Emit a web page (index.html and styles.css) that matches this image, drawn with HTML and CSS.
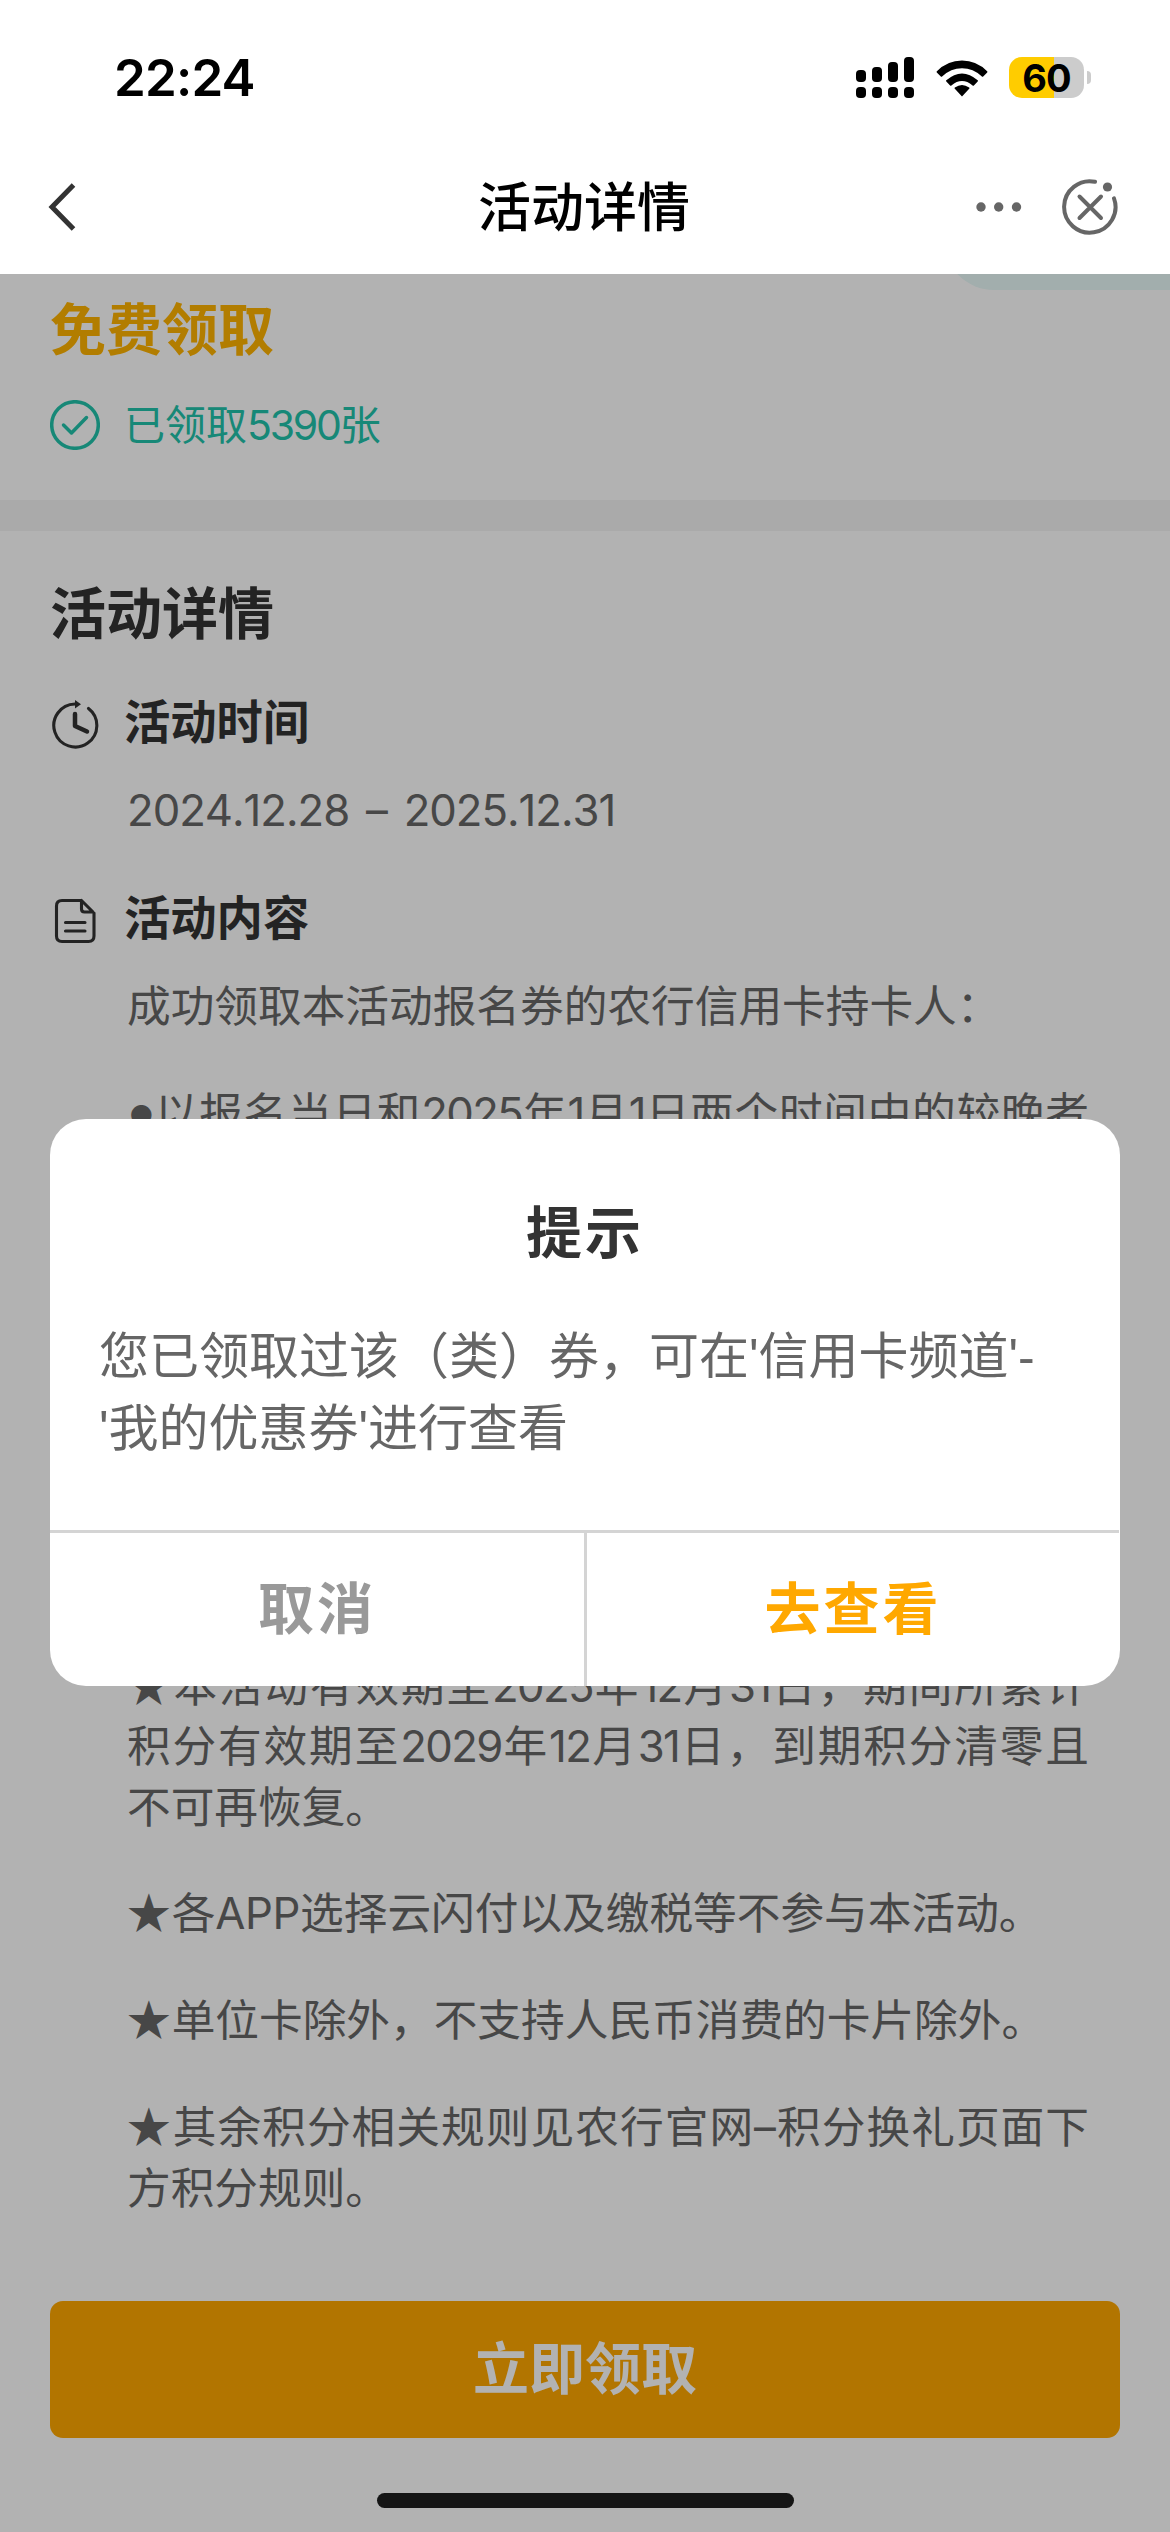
FILE: index.html
```html
<!DOCTYPE html>
<html lang="zh-CN">
<head>
<meta charset="utf-8">
<title>活动详情</title>
<link rel="stylesheet" href="styles.css">
</head>
<body>
<div class="phone">
  <div class="status-bar">
    <span class="time">22:24</span>
    <div class="status-icons">
      <svg class="signal" width="58" height="41" viewBox="0 0 58 41">
        <rect x="0" y="13" width="10" height="12" rx="4"/><rect x="16" y="10" width="10" height="15" rx="4"/>
        <rect x="32" y="5" width="10" height="20" rx="4"/><rect x="48" y="0" width="10" height="25" rx="4"/>
        <rect x="0" y="30" width="10" height="11" rx="4"/><rect x="16" y="30" width="10" height="11" rx="4"/>
        <rect x="32" y="30" width="10" height="11" rx="4"/><rect x="48" y="30" width="10" height="11" rx="4"/>
      </svg>
      <svg class="wifi" width="52" height="38" viewBox="0 0 52 38">
        <path d="M26 37.5 L33.4 29.6 Q33.8 29 33.1 28.5 Q26 23.4 18.900 28.500 Q18.200 29 18.600 29.600 Z"/>
        <path d="M10.300 21.300 Q26 7.500 41.700 21.300 Q42.300 21.900 41.700 22.500 L37.900 26.400 Q37.300 27 36.600 26.400 Q26 17.500 15.400 26.400 Q14.700 27 14.100 26.400 L10.300 22.500 Q9.700 21.900 10.300 21.300 Z"/>
        <path d="M.9 12.200 Q11.500 1.500 26 1.500 Q40.500 1.500 51.100 12.200 Q51.800 12.800 51.200 13.400 L47.200 17.400 Q46.600 18 45.900 17.400 Q37.200 9.200 26 9.200 Q14.800 9.200 6.100 17.400 Q5.400 18 4.800 17.400 L.8 13.400 Q.2 12.800 .9 12.200 Z"/>
      </svg>
      <div class="battery"><span class="battery-body">60</span><span class="battery-cap"></span></div>
    </div>
  </div>
  <div class="nav-bar">
    <svg class="back" width="30" height="50" viewBox="0 0 30 50"><path d="M26.500 3 L5 25 L26.500 47"/></svg>
    <h1>活动详情</h1>
    <div class="nav-actions">
      <svg width="46" height="10" viewBox="0 0 46 10"><circle cx="5" cy="5" r="4.700"/><circle cx="22.700" cy="5" r="4.700"/><circle cx="40.500" cy="5" r="4.700"/></svg>
      <svg class="close" width="60" height="60" viewBox="0 0 60 60">
        <path d="M35 4.800 A25.700 25.700 0 1 0 54 21.300"/>
        <path d="M19.500 19.500 L41 41 M41 19.500 L19.500 41"/>
        <circle cx="47.500" cy="10" r="4.600"/>
      </svg>
    </div>
  </div>

  <main class="page">
    <section class="coupon">
      <div class="corner-tag"></div>
      <div class="price">免费领取</div>
      <div class="claimed">
        <svg width="50" height="50" viewBox="0 0 50 50"><circle cx="25" cy="25" r="23.300"/><path d="M13.500 25 L21.500 33 L36.500 17.500"/></svg>
        <span>已领取<span class="num">5390</span>张</span>
      </div>
    </section>
    <section class="details">
      <h2>活动详情</h2>
      <div class="item-head first">
        <svg width="50" height="50" viewBox="0 0 50 50">
          <path d="M38.500 8.500 A21.500 21.500 0 1 1 25 4"/><path d="M25 14 V26 L37 31.500" class="thick"/><path class="solid" d="M25 0 L31 4.200 L25 8.500 Z"/>
        </svg>
        <h3>活动时间</h3>
      </div>
      <div class="item-body"><p class="date">2024.12.28 – 2025.12.31</p></div>
      <div class="item-head">
        <svg width="50" height="50" viewBox="0 0 50 50">
          <path d="M31 4.500 H12 Q6.500 4.500 6.500 10 V40 Q6.500 45.500 12 45.500 H38.500 Q44 45.500 44 40 V17 L31.500 4.500 V13 Q31.500 16 34.500 16 H43"/><path d="M15.500 26.500 H35 M15.500 35 H35"/>
        </svg>
        <h3>活动内容</h3>
      </div>
      <div class="item-body">
        <p>成功领取本活动报名券的农行信用卡持卡人：</p>
        <p class="under-dialog"><span class="line full"><span class="dot">●</span>以报名当日和<span class="num">2025</span>年<span class="num">1</span>月<span class="num">1</span>日两个时间中的较晚者</span></p>
        <p><span class="line full"><span class="star">★</span>本活动有效期至<span class="num">2025</span>年<span class="num">12</span>月<span class="num">31</span>日，期间所累计</span><span class="line full">积分有效期至<span class="num">2029</span>年<span class="num">12</span>月<span class="num">31</span>日，到期积分清零且</span><span class="line">不可再恢复。</span></p>
        <p><span class="star">★</span>各<span class="latin">APP</span>选择云闪付以及缴税等不参与本活动。</p>
        <p><span class="star">★</span>单位卡除外，不支持人民币消费的卡片除外。</p>
        <p><span class="line full"><span class="star">★</span>其余积分相关规则见农行官网–积分换礼页面下</span><span class="line">方积分规则。</span></p>
      </div>
    </section>
    <footer class="footer">
      <button class="claim-button">立即领取</button>
    </footer>
  </main>

  <div class="overlay">
    <div class="dialog">
      <div class="dialog-content">
        <h2>提示</h2>
        <p>您已领取过该（类）券，可在'信用卡频道'-<br>'我的优惠券'进行查看</p>
      </div>
      <div class="dialog-actions">
        <button class="cancel">取消</button>
        <button class="confirm">去查看</button>
      </div>
    </div>
    <div class="home-indicator"></div>
  </div>
</div>
</body>
</html>
```
FILE: styles.css
```css
* { box-sizing: border-box; margin: 0; padding: 0; }
body {
  width: 1170px;
  background: #fff;
  font-family: Inter, "Noto Sans CJK SC", sans-serif;
}
button { border: 0; background: none; font: inherit; }
.phone {
  position: relative;
  display: flex;
  flex-direction: column;
  width: 1170px;
  height: 2532px;
  overflow: hidden;
}

.status-bar {
  display: flex;
  justify-content: space-between;
  height: 140px;
  padding: 57px 79px 0 114px;
}
.time { font-size: 51px; font-weight: 600; line-height: 41px; letter-spacing: -0.8px; }
.status-icons { display: flex; height: 41px; }
.wifi { margin: 2px 21px 0 22px; }
.battery { display: flex; align-items: center; gap: 3px; }
.battery-body {
  width: 75px;
  height: 41px;
  border-radius: 13px;
  background: linear-gradient(90deg, #fc0 60%, #ccc 60%);
  font-size: 38px;
  font-weight: 700;
  line-height: 42px;
  letter-spacing: -1px;
  text-align: center;
}
.battery-cap { width: 4px; height: 13px; border-radius: 0 6px 6px 0; background: #ccc; }

.nav-bar {
  display: grid;
  grid-template-columns: 1fr auto 1fr;
  align-items: center;
  height: 134px;
  padding: 0 49px 0 47px;
}
.back { fill: none; stroke: #333; stroke-width: 5; }
.nav-bar h1 { padding-top: 1px; font-size: 53px; font-weight: 500; line-height: 60px; }
.nav-actions { display: flex; align-items: center; justify-content: flex-end; gap: 38px; fill: #666; }
.close { margin-right: 1px; }
.close path { fill: none; stroke: #666; stroke-width: 4; stroke-linecap: round; }

.page { display: flex; flex-direction: column; flex: 1; color: #666; }
.coupon {
  position: relative;
  height: 257px;
  padding: 21px 50px 0;
  border-bottom: 31px solid #f4f4f4;
}
.corner-tag {
  position: absolute;
  top: -40px;
  right: 0;
  width: 226px;
  height: 56px;
  border-bottom-left-radius: 50px;
  background: #e8f9f8;
  clip-path: inset(40px 0 0 0);
}
.price { color: #ffb300; font-size: 56px; font-weight: 700; line-height: 70px; }
.claimed {
  display: flex;
  align-items: center;
  gap: 24px;
  margin-top: 35px;
  color: #21c3ab;
  font-size: 41px;
  line-height: 50px;
}
.claimed svg { fill: none; stroke: currentColor; stroke-width: 3.5; stroke-linecap: round; stroke-linejoin: round; }
.num { letter-spacing: -1.6px; }
.claimed .num { letter-spacing: -2.2px; }
.latin { letter-spacing: -0.4px; }

.details { padding: 48px 50px 0; }
.details h2 { color: #333; font-size: 56px; font-weight: 700; line-height: 70px; }
.item-head { display: flex; align-items: center; gap: 24px; height: 50px; margin-top: 55px; }
.item-head.first { margin-top: 51px; }
.item-head h3 { margin-top: -6px; color: #333; font-size: 46.3px; font-weight: 600; line-height: 50px; }
.item-head svg { fill: none; stroke: #333; stroke-width: 3.1; stroke-linecap: round; stroke-linejoin: round; }
.item-head .thick { stroke-width: 4.5; }
.item-head .solid { fill: #333; stroke: none; }
.item-body {
  width: 962px;
  padding-top: 31px;
  margin-left: 77px;
  font-size: 43.68px;
  line-height: 60.3px;
}
.item-body p { white-space: nowrap; }
.item-body p + p { margin-top: 46.6px; }
.item-body .under-dialog + p { margin-top: 512.5px; }
.item-body .date { font-kerning: none; letter-spacing: -1px; word-spacing: 5.5px; }
.line { display: block; }
.full { text-align: justify; text-align-last: justify; white-space: normal; }
.dot {
  display: inline-block;
  width: 27px;
  padding-left: 2px;
  font-size: 27px;
  line-height: 1;
  text-align-last: left;
  vertical-align: 4px;
}
.star { margin-right: 1px; font-family: "Noto Sans CJK SC"; line-height: 1; }

.footer { margin-top: auto; padding: 0 50px 94px; }
.claim-button {
  display: block;
  width: 100%;
  height: 137px;
  border-radius: 13px;
  background: #ffa800;
  color: #fff;
  font-size: 56px;
  font-weight: 600;
  line-height: 137px;
}

.overlay { position: absolute; inset: 274px 0 0; background: rgba(0, 0, 0, 0.302); }
.dialog {
  position: absolute;
  top: 845px;
  left: 50px;
  display: flex;
  flex-direction: column;
  width: 1070px;
  height: 567px;
  border-radius: 36px;
  background: #fff;
  overflow: hidden;
}
.dialog-content { flex: 1; padding: 74px 49px 0; color: #666; font-size: 50px; line-height: 72px; }
.dialog h2 {
  color: #333;
  font-size: 56px;
  font-weight: 700;
  line-height: 80px;
  letter-spacing: 3px;
  text-align: center;
}
.dialog p { margin-top: 48px; font-family: "Liberation Sans", "Noto Sans CJK SC", sans-serif; white-space: nowrap; }
.dialog-actions {
  display: grid;
  grid-template-columns: 537px 1fr;
  height: 156px;
  margin-right: 1px;
  border-top: 3px solid #d4d4d4;
}
.dialog-actions button { font-size: 56px; font-weight: 700; line-height: 153px; letter-spacing: 3px; }
.dialog-actions .cancel { border-right: 3px solid #d4d4d4; color: #999; }
.dialog-actions .confirm { color: #ffa800; }
.home-indicator {
  position: absolute;
  bottom: 24px;
  left: 377px;
  width: 417px;
  height: 15px;
  border-radius: 8px;
  background: #151515;
}
```
